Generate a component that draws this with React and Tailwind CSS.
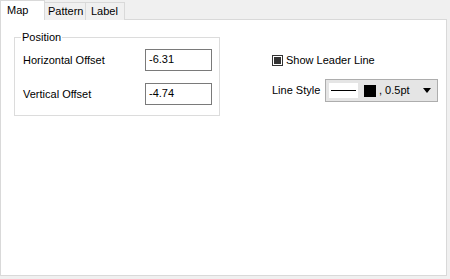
import React from "react";

export default function App() {
  const font = { fontFamily: '"Liberation Sans", Arial, sans-serif' };
  return (
    <div className="w-[450px] h-[279px] bg-[#f0f0f0] text-[11px] text-black overflow-hidden" style={font}>
      <div className="flex h-[20px] items-end">
        <div className="relative z-10 h-[20px] w-[45px] shrink-0 bg-white border border-b-0 border-[#d9d9d9] pl-[6px] leading-[18px]">Map</div>
        <div className="h-[18px] w-[41px] shrink-0 bg-[#f0f0f0] border border-l-0 border-b-0 border-[#d9d9d9] pl-[3px] leading-[17px] whitespace-nowrap">Pattern</div>
        <div className="h-[18px] w-[39px] shrink-0 bg-[#f0f0f0] border border-l-0 border-b-0 border-[#d9d9d9] pl-[5px] leading-[17px]">Label</div>
      </div>
      <div className="-mt-px w-[447px] h-[257px] bg-white border border-[#d9d9d9] flex">
        <fieldset className="ml-[13px] mt-[10px] w-[206px] h-[86px] border border-[#dcdcdc] px-[8px] shrink-0">
          <legend className="ml-[-2px] px-[1px] leading-[14px]">Position</legend>
          <div className="flex items-center justify-between h-[22px] mt-[5px]">
            <span>Horizontal Offset</span>
            <div className="w-[67px] h-[22px] border border-[#7a7a7a] pl-[3px] leading-[18px] mr-[-1px]">-6.31</div>
          </div>
          <div className="flex items-center justify-between h-[22px] mt-[12px]">
            <span>Vertical Offset</span>
            <div className="w-[67px] h-[22px] border border-[#7a7a7a] pl-[3px] leading-[18px] mr-[-1px]">-4.74</div>
          </div>
        </fieldset>
        <div className="ml-[52px] mt-[33px] flex flex-col">
          <div className="flex items-center h-[14px]">
            <div className="w-[11px] h-[11px] border border-[#333333] flex items-center justify-center">
              <div className="w-[7px] h-[7px] bg-[#333333]" />
            </div>
            <span className="ml-[3px]">Show Leader Line</span>
          </div>
          <div className="flex items-center mt-[12px]">
            <span className="w-[53px] shrink-0">Line Style</span>
            <div className="w-[113px] h-[23px] bg-[#e5e5e5] border border-[#adadad] flex items-center shrink-0">
              <div className="ml-[3px] w-[29px] h-[15px] bg-white flex items-center px-[2px]">
                <div className="w-full h-px bg-black" />
              </div>
              <div className="ml-[6px] w-[12px] h-[12px] bg-black" />
              <span className="ml-[3px]">, 0.5pt</span>
              <svg className="ml-auto mr-[6px]" width="8" height="5" viewBox="0 0 8 5"><path d="M0 0H8L4 5Z" fill="#000" /></svg>
            </div>
          </div>
        </div>
      </div>
    </div>
  );
}
